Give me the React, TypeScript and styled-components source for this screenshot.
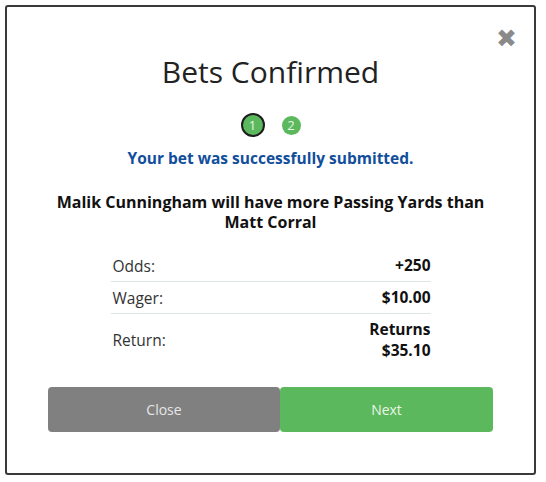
import React from "react";
import styled, { createGlobalStyle } from "styled-components";

const Global = createGlobalStyle`
  html, body { margin: 0; padding: 0; background: #ffffff; }
  body { font-family: "Open Sans", "Noto Sans", sans-serif; }
`;

const Modal = styled.div`
  box-sizing: border-box;
  margin: 5px;
  width: 531px;
  height: 470px;
  border: 2px solid #3a3a3a;
  border-radius: 3px;
  position: relative;
  display: flex;
  flex-direction: column;
  align-items: center;
  padding: 44px 41px 0;
`;

const CloseX = styled.button`
  position: absolute;
  top: 19px;
  right: 17px;
  border: none;
  background: none;
  padding: 0;
  color: #8a8a8a;
  font-family: "DejaVu Sans", sans-serif;
  font-weight: bold;
  font-size: 25px;
  line-height: 26px;
  cursor: pointer;
`;

const Title = styled.h2`
  margin: 0;
  font-weight: 400;
  font-size: 30px;
  line-height: 42px;
  color: #222;
`;

const Steps = styled.div`
  display: flex;
  align-items: center;
  gap: 17px;
  margin-top: 20px;
`;

const Step = styled.div<{ $active?: boolean }>`
  box-sizing: border-box;
  width: ${(p) => (p.$active ? 24 : 19)}px;
  height: ${(p) => (p.$active ? 24 : 19)}px;
  border-radius: 50%;
  background: #5cb85c;
  border: ${(p) => (p.$active ? "2px solid #1e1e1e" : "none")};
  color: #e8f5e8;
  font-size: 13px;
  display: flex;
  align-items: center;
  justify-content: center;
`;

const Success = styled.p`
  margin: 11px 0 0;
  color: #114e9b;
  font-weight: 700;
  font-size: 15.5px;
  line-height: 21px;
`;

const Question = styled.p`
  margin: 23px 0 0;
  color: #111;
  font-weight: 700;
  font-size: 16px;
  line-height: 20px;
  text-align: center;
  max-width: 440px;
`;

const Table = styled.div`
  width: 320px;
  margin-top: 18px;
  display: flex;
  flex-direction: column;
`;

const Row = styled.div<{ $last?: boolean }>`
  display: flex;
  justify-content: space-between;
  align-items: center;
  padding: 5px 0 5px 2px;
  border-bottom: ${(p) => (p.$last ? "none" : "1px solid #dfe5e5")};
  font-size: 15.5px;
  line-height: 20px;
  color: #333;
`;

const Value = styled.span`
  font-weight: 700;
  color: #111;
  text-align: right;
  line-height: 21px;
`;

const Buttons = styled.div`
  display: flex;
  width: 445px;
  margin-top: 21px;
`;

const Btn = styled.button<{ $variant: "gray" | "green" }>`
  height: 45px;
  border: none;
  border-radius: 4px;
  font-family: "Open Sans", sans-serif;
  font-size: 14px;
  cursor: pointer;
  background: ${(p) => (p.$variant === "gray" ? "#808080" : "#5cb85c")};
  color: ${(p) => (p.$variant === "gray" ? "#e6e6e6" : "#e9f6e9")};
  flex: ${(p) => (p.$variant === "gray" ? "0 0 232px" : "1")};
`;

export default function App() {
  return (
    <>
      <Global />
      <Modal>
        <CloseX aria-label="close">✖</CloseX>
        <Title>Bets Confirmed</Title>
        <Steps>
          <Step $active>1</Step>
          <Step>2</Step>
        </Steps>
        <Success>Your bet was successfully submitted.</Success>
        <Question>Malik Cunningham will have more Passing Yards than Matt Corral</Question>
        <Table>
          <Row>
            <span>Odds:</span>
            <Value>+250</Value>
          </Row>
          <Row>
            <span>Wager:</span>
            <Value>$10.00</Value>
          </Row>
          <Row $last>
            <span>Return:</span>
            <Value>
              Returns
              <br />
              $35.10
            </Value>
          </Row>
        </Table>
        <Buttons>
          <Btn $variant="gray">Close</Btn>
          <Btn $variant="green">Next</Btn>
        </Buttons>
      </Modal>
    </>
  );
}
